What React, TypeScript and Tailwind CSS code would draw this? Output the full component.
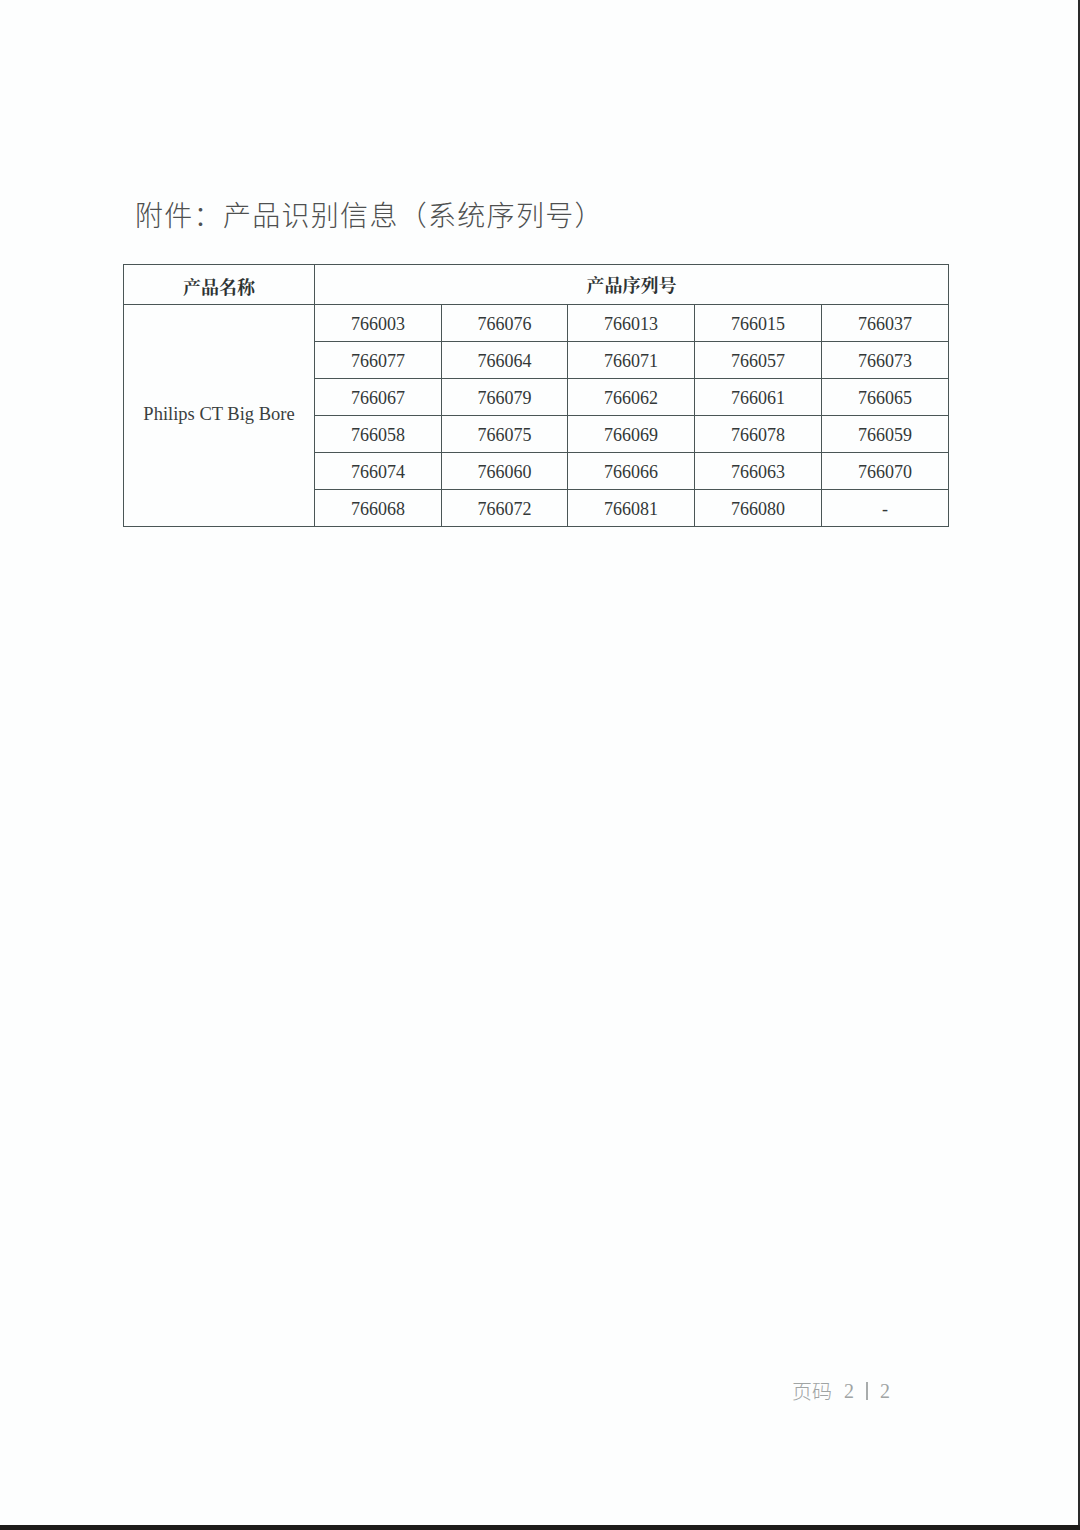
import React from "react";

const rows: string[][] = [
  ["766003", "766076", "766013", "766015", "766037"],
  ["766077", "766064", "766071", "766057", "766073"],
  ["766067", "766079", "766062", "766061", "766065"],
  ["766058", "766075", "766069", "766078", "766059"],
  ["766074", "766060", "766066", "766063", "766070"],
  ["766068", "766072", "766081", "766080", "-"],
];

const serif = { fontFamily: '"Liberation Serif", "Noto Sans CJK SC", serif' };

export default function App() {
  return (
    <div className="w-[1080px] h-[1530px] bg-white flex flex-col overflow-hidden">
      <div className="flex flex-1 min-h-0">
        <div className="flex-1 flex flex-col bg-[#fdfefe]">
          <div
            className="pt-[196px] pl-[135px] text-[28px] leading-[36px] text-[#4e5050] tracking-[1.3px]"
            style={{ fontFamily: '"Noto Sans CJK SC", sans-serif', fontWeight: 300 }}
          >
            附件：产品识别信息（系统序列号）
          </div>
          <div className="pl-[123px] pt-[32px]">
            <table
              className="w-[825px] border-collapse table-fixed text-[#333838]"
              style={serif}
            >
              <colgroup>
                <col className="w-[191px]" />
                <col className="w-[127px]" />
                <col className="w-[126px]" />
                <col className="w-[127px]" />
                <col className="w-[127px]" />
                <col className="w-[127px]" />
              </colgroup>
              <tbody>
                <tr className="h-[40px]">
                  <td
                    className="border border-[#4a5656] text-center text-[18px] pt-[3px] font-bold text-[#2e3333]"
                    style={{ fontFamily: '"Noto Serif CJK SC", "Noto Sans CJK SC", serif' }}
                  >
                    产品名称
                  </td>
                  <td
                    colSpan={5}
                    className="border border-[#4a5656] text-center text-[18px] font-bold text-[#2e3333]"
                    style={{ fontFamily: '"Noto Serif CJK SC", "Noto Sans CJK SC", serif' }}
                  >
                    产品序列号
                  </td>
                </tr>
                {rows.map((r, i) => (
                  <tr key={i} className="h-[37px]">
                    {i === 0 && (
                      <td
                        rowSpan={6}
                        className="border border-[#4a5656] text-center text-[18.5px] pb-[2px] text-[#3a3f3f]"
                      >
                        Philips CT Big Bore
                      </td>
                    )}
                    {r.map((v, j) => (
                      <td
                        key={j}
                        className="border border-[#4a5656] text-center text-[18px] leading-[20px] pt-[2px]"
                      >
                        {v}
                      </td>
                    ))}
                  </tr>
                ))}
              </tbody>
            </table>
          </div>
          <div className="flex-1" />
          <div
            className="pb-[119px] pr-[188px] flex justify-end items-center gap-[12px] text-[20px] text-[#a0a4a4]"
            style={{ fontFamily: '"Liberation Serif", "Noto Sans CJK SC", serif' }}
          >
            <span style={{ fontFamily: '"Noto Sans CJK SC", sans-serif', fontWeight: 300 }}>页码</span>
            <span>2</span>
            <span className="w-[2px] h-[18px] bg-[#a8acac]" />
            <span>2</span>
          </div>
        </div>
        <div className="w-[2px] bg-[#2a2a2a]" />
      </div>
      <div className="h-[5px] bg-[#1e1c1a]" />
    </div>
  );
}
